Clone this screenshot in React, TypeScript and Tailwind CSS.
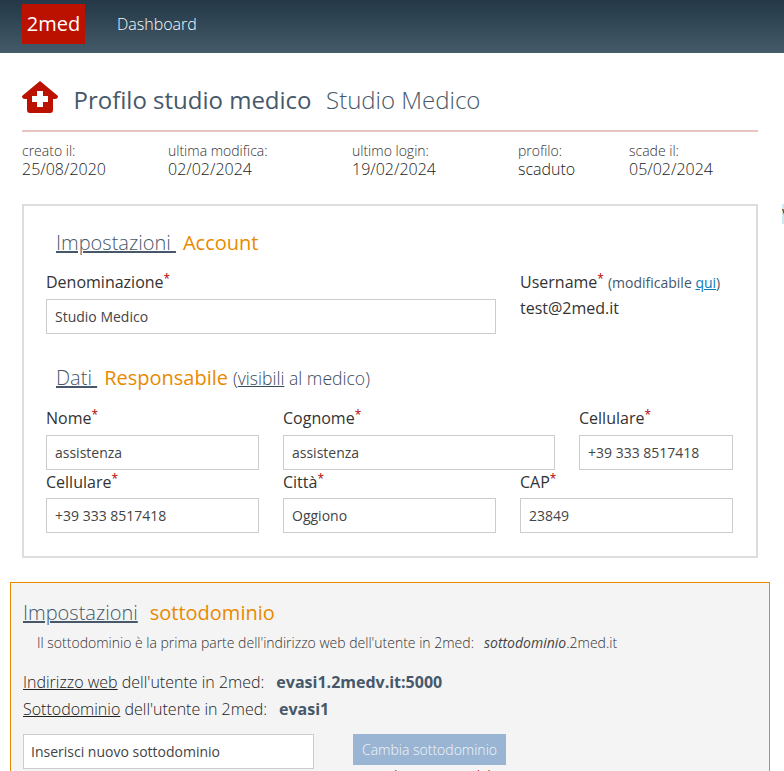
const sans = "font-['Open_Sans',sans-serif]";

const stats = [
  { label: 'creato il:', value: '25/08/2020' },
  { label: 'ultima modifica:', value: '02/02/2024' },
  { label: 'ultimo login:', value: '19/02/2024' },
  { label: 'profilo:', value: 'scaduto' },
  { label: 'scade il:', value: '05/02/2024' },
];

function Field({ label, value, short }: { label: string; value: string; short?: boolean }) {
  return (
    <div>
      <div className={`${short ? 'h-[27px]' : 'h-[28px]'} text-[16px] leading-[22px] text-[#333]`}>
        {label}
        <sup className="text-[#b10000] text-[12px] top-[-5px]">*</sup>
      </div>
      <input
        readOnly
        value={value}
        className="w-full h-[35px] border border-[#ccc] bg-white px-2 text-[14px] text-[#444] outline-none"
      />
    </div>
  );
}

function HouseIcon() {
  return (
    <svg width="36" height="33" viewBox="0 0 36 33" className="shrink-0">
      <path
        d="M18 0 L36 15 Q36 18 33 18 L31 18 L31 29 Q31 32 28 32 L8 32 Q5 32 5 29 L5 18 L3 18 Q0 18 0 15 Z"
        fill="#bb1100"
      />
      <path d="M15 10h6v5h5v6h-5v5h-6v-5h-5v-6h5z" fill="#fff" />
    </svg>
  );
}

export default function App() {
  return (
    <div className={`${sans} relative h-[771px] w-[784px] overflow-hidden bg-white`}>
      {/* Top bar */}
      <header className="flex h-[53px] bg-gradient-to-b from-[#243847] to-[#445b6a] pl-[22px]">
        <div className="mt-[4px] flex h-[40px] w-[63px] items-center justify-center bg-[#bb1100] text-[20px] text-white">
          2med
        </div>
        <div className="ml-[32px] mt-[13px] text-[16px] leading-[22px] font-light text-[#f5fbff]">Dashboard</div>
      </header>

      {/* Page title */}
      <div className="ml-[22px] mr-[26px] mt-[28px] flex h-[33px] items-center">
        <HouseIcon />
        <h1 className="ml-[15.5px] mt-[4px] text-[24px] text-[#46586a]">Profilo studio medico</h1>
        <span className="ml-[14.5px] mt-[4px] text-[24px] font-light text-[#46586a]">Studio Medico</span>
      </div>
      <div className="ml-[22px] mr-[26px] mt-[16px] h-[2px] bg-[#e6c4c0]" />

      {/* Dates */}
      <div className="ml-[22px] mr-[26px] mt-[10px] grid grid-cols-[146px_184px_166px_111px_1fr]">
        {stats.map((s) => (
          <div key={s.label}>
            <div className="text-[14px] leading-[17px] font-light text-[#333]">{s.label}</div>
            <div className="text-[16px] leading-[20px] font-light text-[#222]">{s.value}</div>
          </div>
        ))}
      </div>

      {/* Account card */}
      <section className="ml-[22px] mr-[26px] mt-[25px] h-[354px] border-2 border-[#ddd] px-[22px] pt-[23px]">
        <h2 className="ml-[10px] h-[28px] text-[20px] leading-[28px] font-light text-[#46586a]">
          <span className="underline">Impostazioni&nbsp;</span>
          <span className="ml-[7px] font-normal text-[#e88a00]">Account</span>
        </h2>
        <div className="mt-[14px] grid grid-cols-[213px_213px_213px] gap-x-[24px]">
          <div className="col-span-2">
            <Field label="Denominazione" value="Studio Medico" />
          </div>
          <div>
            <div className="h-[26px] text-[16px] leading-[22px] text-[#333] whitespace-nowrap">
              Username<sup className="text-[#b10000] text-[12px] top-[-5px]">*</sup>
              <span className="ml-[4px] text-[14px] text-[#46586a]">
                (modificabile <a className="text-[#0a7cb8] underline">qui</a>)
              </span>
            </div>
            <div className="text-[16px] leading-[22px] text-[#333]">test@2med.it</div>
          </div>
        </div>

        <h2 className="ml-[10px] mt-[30px] h-[28px] text-[20px] leading-[28px] font-light text-[#46586a] whitespace-nowrap">
          <span className="underline">Dati&nbsp;</span>
          <span className="ml-[7px] font-normal text-[#e88a00]">Responsabile</span>
          <span className="ml-[5px] text-[17.6px] font-light text-[#3a4a5a]">
            (<span className="underline">visibili</span> al medico)
          </span>
        </h2>

        <div className="mt-[15px] grid grid-cols-[213px_272px_154px] gap-x-[24px]">
          <Field label="Nome" value="assistenza" />
          <Field label="Cognome" value="assistenza" />
          <Field label="Cellulare" value="+39 333 8517418" />
        </div>
        <div className="mt-[1px] grid grid-cols-[213px_213px_213px] gap-x-[24px]">
          <Field label="Cellulare" value="+39 333 8517418" short />
          <Field label="Città" value="Oggiono" short />
          <Field label="CAP" value="23849" short />
        </div>
      </section>

      {/* Subdomain card */}
      <section className="ml-[10px] mr-[14px] mt-[24px] h-[260px] border border-[#e88a00] bg-[#f4f4f4] px-[12px] pt-[16px]">
        <h2 className="h-[28px] text-[20px] leading-[28px] font-light text-[#46586a]">
          <span className="underline">Impostazioni</span>
          <span className="ml-[12px] font-normal text-[#e88a00]">sottodominio</span>
        </h2>
        <p className="ml-[14px] mt-[6px] text-[14px] leading-[20px] font-light text-[#333] whitespace-nowrap">
          Il sottodominio è la prima parte dell'indirizzo web dell'utente in 2med:
          <span className="ml-[10px] italic font-normal text-[#444]">sottodominio</span>.2med.it
        </p>
        <div className="mt-[17px] h-[26px] text-[16px] leading-[24px] font-light text-[#222] whitespace-nowrap">
          <span className="underline">Indirizzo web</span> dell'utente in 2med:
          <span className="ml-[12px] font-bold text-[#46586a]">evasi1.2medv.it:5000</span>
        </div>
        <div className="h-[27px] text-[16px] leading-[27px] font-light text-[#222] whitespace-nowrap">
          <span className="underline">Sottodominio</span> dell'utente in 2med:
          <span className="ml-[12px] font-bold text-[#46586a]">evasi1</span>
        </div>
        <div className="mt-[11px] flex items-start">
          <input
            readOnly
            value="Inserisci nuovo sottodominio"
            className="h-[35px] w-[291px] border border-[#ccc] bg-white pl-[7px] pr-2 text-[14px] text-[#444] outline-none"
          />
          <div className="ml-[39px] w-[153px]">
            <button className="h-[31px] w-[153px] bg-[#99b5d3] text-[14px] font-light text-[#f2f6fa]">
              Cambia sottodominio
            </button>
            <div className="mt-[2px] text-center text-[12px] whitespace-nowrap text-[#d00000]">sottodominio non valido</div>
          </div>
        </div>
      </section>

      {/* Sliver of highlighted text poking in at the right edge */}
      <div className="absolute left-[782px] top-[204px] h-[20px] w-[2px] overflow-hidden bg-[#cfe8f2] text-[14px] leading-[20px] text-[#333]">
        V
      </div>
    </div>
  );
}
